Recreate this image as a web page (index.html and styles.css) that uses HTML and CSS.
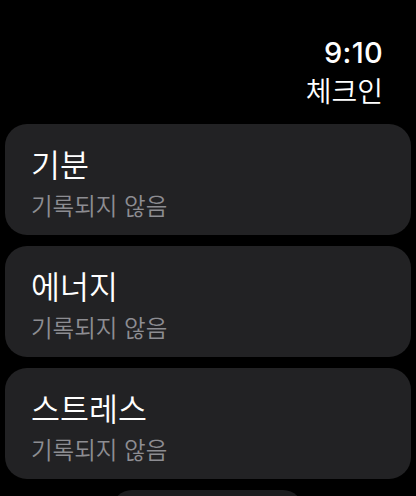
FILE: index.html
```html
<!DOCTYPE html>
<html lang="ko">
<head>
<meta charset="utf-8">
<link rel="stylesheet" href="styles.css">
</head>
<body>
<div class="screen">
  <header class="top">
    <div class="time">9:10</div>
    <div class="page-title">체크인</div>
  </header>
  <ul class="list">
    <li class="card">
      <div class="card-title">기분</div>
      <div class="card-sub">기록되지 않음</div>
    </li>
    <li class="card">
      <div class="card-title">에너지</div>
      <div class="card-sub">기록되지 않음</div>
    </li>
    <li class="card">
      <div class="card-title">스트레스</div>
      <div class="card-sub">기록되지 않음</div>
    </li>
    <li class="peek"></li>
  </ul>
</div>
</body>
</html>
```
FILE: styles.css
```css
html, body {
  margin: 0;
  padding: 0;
  background: #000;
}
.screen {
  width: 416px;
  height: 496px;
  overflow: hidden;
  background: #000;
  color: #fff;
  font-family: "Noto Sans CJK KR", "Noto Sans", sans-serif;
  font-weight: 350;
}
.top {
  display: flex;
  flex-direction: column;
  align-items: flex-end;
  padding: 36px 33px 0 0;
  height: 89px;
  box-sizing: border-box;
}
.time {
  font-family: Inter, "Noto Sans", sans-serif;
  font-weight: 500;
  font-size: 29px;
  line-height: 34px;
  letter-spacing: 0.3px;
}
.page-title {
  font-size: 28px;
  line-height: 36px;
  margin-top: 2px;
}
.list {
  list-style: none;
  margin: 0;
  padding: 35px 5px 0;
  display: flex;
  flex-direction: column;
  gap: 11px;
}
.card {
  height: 111px;
  box-sizing: border-box;
  background: #222224;
  border-radius: 22px;
  padding: 19px 20px 0 26px;
  display: flex;
  flex-direction: column;
}
.card-title {
  font-size: 31.5px;
  line-height: 40px;
  color: #fff;
}
.card-sub {
  font-size: 23.5px;
  line-height: 30px;
  margin-top: 7px;
  color: #8d8d92;
}
.peek {
  height: 40px;
  margin: 0 108px 0 107px;
  background: #1c1c1e;
  border-radius: 20px;
}
```
